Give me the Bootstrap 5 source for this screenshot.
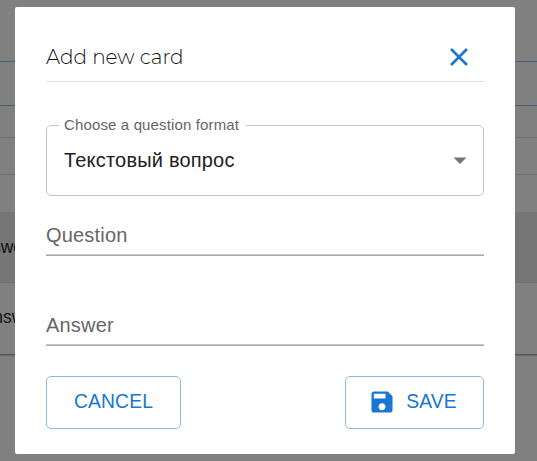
<!DOCTYPE html>
<html lang="en">
<head>
<meta charset="utf-8">
<meta name="viewport" content="width=device-width, initial-scale=1">
<title>Add new card</title>
<link href="https://cdn.jsdelivr.net/npm/bootstrap@5.3.0/dist/css/bootstrap.min.css" rel="stylesheet">
<style>
  body { font-family: "Liberation Sans", Arial, sans-serif; background: #808080; height: 461px; overflow: hidden; }
  .page-back { height: 461px; color: #111; font-size: 17.5px; }
  .strip { box-sizing: border-box; border-bottom: 1px solid #707070; white-space: nowrap; }
  .strip-a { height: 62px; border-color: #485b78; }
  .strip-b { height: 44px; border-color: #485b78; }
  .strip-c { height: 32px; }
  .strip-d { height: 37px; }
  .strip-e { height: 37px; border: 0; }
  .strip-f { height: 71px; background: #767676; text-indent: -29.5px; }
  .strip-g { height: 72px; border-color: #555; box-shadow: 0 1px 1px #6c6c6c; text-indent: -18.5px; padding-bottom: 2px; }
  .dialog-shade { padding: 7px 22px 7px 15px; }
  .dialog-box { width: 500px; height: 447px; border-radius: 2px; padding: 0 31px; }
  .dialog-head { height: 75px; padding-top: 26px; border-bottom: 1px solid #e0e0e0; padding-right: 13px; }
  .dialog-title { font-family: "Montserrat", Inter, sans-serif; font-weight: 300; font-size: 20px; line-height: 48px; letter-spacing: 0; color: #111; }
  .close-btn { color: #1976d2; line-height: 0; }
  .format-field { height: 71px; margin: 43px 0 0; border: 1px solid #c4c4c4; border-radius: 5px; padding: 0 10px 2px 17px; font-size: 20px; letter-spacing: .19px; color: #212121; }
  .format-label { top: -12px; left: 12px; padding: 0 7px 0 5px; font-size: 15px; line-height: 22px; letter-spacing: .14px; color: #666; }
  .line-field { border-bottom: 1px solid #a8a8a8; box-shadow: inset 0 -1px #c8c8c8; font-size: 20px; line-height: 30px; letter-spacing: .19px; color: #666; }
  .line-question { height: 60px; padding-top: 24px; }
  .line-answer { height: 90px; padding-top: 54px; }
  .dialog-actions { padding-top: 30px; }
  .action-btn { height: 53px; border: 1px solid #8cbae8; border-radius: 5px; color: #1976d2; font-size: 19.3px; letter-spacing: .15px; padding: 0 0 1px; }
  .action-cancel { width: 135px; }
  .action-save { width: 139px; gap: 10px; padding-right: 4px; }
</style>
<script src="https://cdn.jsdelivr.net/npm/bootstrap@5.3.0/dist/js/bootstrap.bundle.min.js"></script>
</head>
<body>
<div class="page-back d-flex flex-column">
  <div class="strip strip-a"></div>
  <div class="strip strip-b"></div>
  <div class="strip strip-c"></div>
  <div class="strip strip-d"></div>
  <div class="strip strip-e"></div>
  <div class="strip strip-f d-flex align-items-center">Answer</div>
  <div class="strip strip-g d-flex align-items-center">Answer</div>
</div>
<div class="dialog-shade position-absolute top-0 start-0">
  <div class="dialog-box bg-white d-flex flex-column" role="dialog" aria-label="Add new card">
    <div class="dialog-head d-flex justify-content-between align-items-center">
      <h2 class="dialog-title m-0">Add new card</h2>
      <button class="close-btn btn p-0 border-0" aria-label="Close">
        <svg width="24" height="24" viewBox="0 0 24 24" fill="none" stroke="currentColor" stroke-width="2.6"><path d="M4 4l16 16M20 4L4 20"/></svg>
      </button>
    </div>
    <div class="format-field position-relative d-flex justify-content-between align-items-center">
      <span class="format-label position-absolute bg-white">Choose a question format</span>
      <span>Текстовый вопрос</span>
      <svg width="26" height="30" viewBox="0 0 26 30" fill="#757575"><path d="M6.500 12.500h13L13 19z"/></svg>
    </div>
    <div class="line-field line-question">Question</div>
    <div class="line-field line-answer">Answer</div>
    <div class="dialog-actions d-flex justify-content-between">
      <button class="action-btn action-cancel btn">CANCEL</button>
      <button class="action-btn action-save btn d-flex align-items-center justify-content-center">
        <svg width="28" height="28" viewBox="0 0 24 24" fill="currentColor"><path d="M17 3H5c-1.110 0-2 .9-2 2v14c0 1.100.89 2 2 2h14c1.100 0 2-.9 2-2V7l-4-4zm-5 16c-1.660 0-3-1.340-3-3s1.340-3 3-3 3 1.340 3 3-1.340 3-3 3zm3-10H5V5h10v4z"/></svg>
        <span>SAVE</span>
      </button>
    </div>
  </div>
</div>
</body>
</html>
